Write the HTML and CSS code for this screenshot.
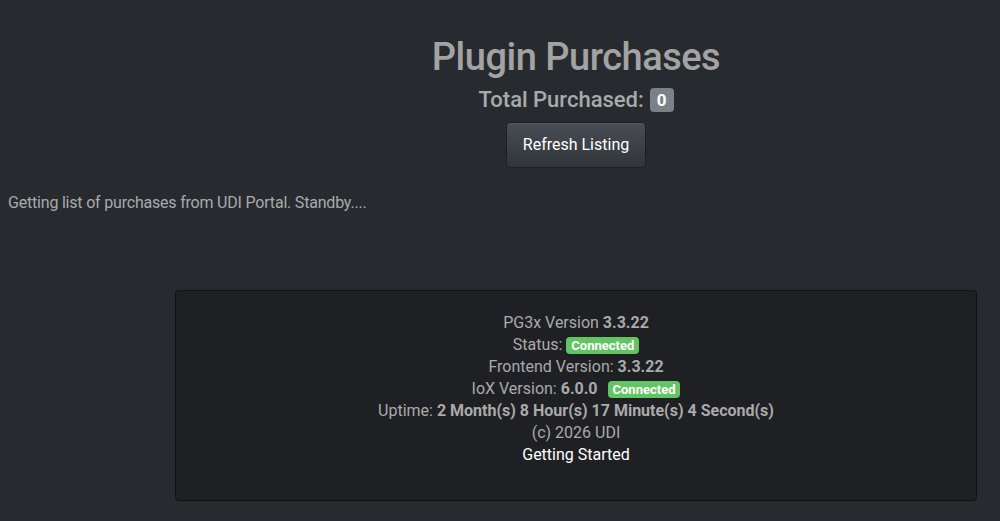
FILE: index.html
```html
<!DOCTYPE html>
<html>
<head>
<meta charset="utf-8">
<link rel="stylesheet" href="styles.css">
</head>
<body>
<div class="page">
  <header class="head">
    <h1 class="title">Plugin Purchases</h1>
    <h4 class="total">Total Purchased: <span class="badge badge-secondary">0</span></h4>
    <button class="btn">Refresh Listing</button>
  </header>
  <p class="status-msg">Getting list of purchases from UDI Portal. Standby....</p>
  <div class="main">
    <footer class="info">
      <div class="line">PG3x Version <b>3.3.22</b></div>
      <div class="line">Status: <span class="badge badge-success">Connected</span></div>
      <div class="line">Frontend Version: <b>3.3.22</b></div>
      <div class="line">IoX Version: <b>6.0.0</b> <span class="badge badge-success gap">Connected</span></div>
      <div class="line">Uptime: <b>2 Month(s) 8 Hour(s) 17 Minute(s) 4 Second(s)</b></div>
      <div class="line">(c) 2026 UDI</div>
      <div class="line"><a class="link" href="#">Getting Started</a></div>
    </footer>
  </div>
</div>
</body>
</html>
```

FILE: styles.css
```css
* { box-sizing: border-box; }
html, body {
  margin: 0;
  padding: 0;
  background: #272b30;
  color: #aaaaaa;
  font-family: Roboto, "Liberation Sans", sans-serif;
  font-size: 16px;
  line-height: 1.5;
}
.page {
  padding-top: 33px;
}
.head {
  margin-left: 152px;
  display: flex;
  flex-direction: column;
  align-items: center;
}
.title {
  margin: 0;
  font-size: 38px;
  font-weight: 500;
  letter-spacing: -0.5px;
  line-height: 48px;
  color: #a3a3a3;
}
.total {
  margin: 3px 0 0;
  font-size: 22px;
  font-weight: 500;
  line-height: 32px;
  color: #aaaaaa;
  display: flex;
  align-items: center;
  gap: 6px;
}
.badge {
  display: inline-block;
  font-weight: 700;
  color: #fff;
  border-radius: 4px;
  line-height: 1;
}
.badge-secondary {
  background: #7a8288;
  font-size: 17px;
  padding: 3.5px 7px;
}
.badge-success {
  background: #62c462;
  font-size: 13px;
  padding: 2px 5px 1.5px;
  vertical-align: 0;
}
.gap { margin-left: 6px; }
.btn {
  margin-top: 6px;
  font-family: inherit;
  font-size: 16px;
  line-height: 24px;
  padding: 10px 16px;
  color: #fff;
  border: 1px solid #1c1e22;
  border-radius: 4px;
  background: linear-gradient(#484e55, #3a3f44 60%, #313539);
  box-shadow: inset 0 1px 0 rgba(255,255,255,0.08);
}
.status-msg {
  margin: 23px 0 0 8px;
  font-size: 16px;
  letter-spacing: -0.2px;
  line-height: 24px;
  color: #aaaaaa;
}
.main {
  margin: 75px 23px 0 175px;
}
.info {
  background: #1f2024;
  border: 1px solid #101113;
  border-radius: 4px;
  padding: 21px 0 34px;
  text-align: center;
  min-height: 211px;
}
.line {
  line-height: 22px;
  font-size: 16px;
}
.line b { font-weight: 700; }
.link {
  color: #ffffff;
  text-decoration: none;
}
```
